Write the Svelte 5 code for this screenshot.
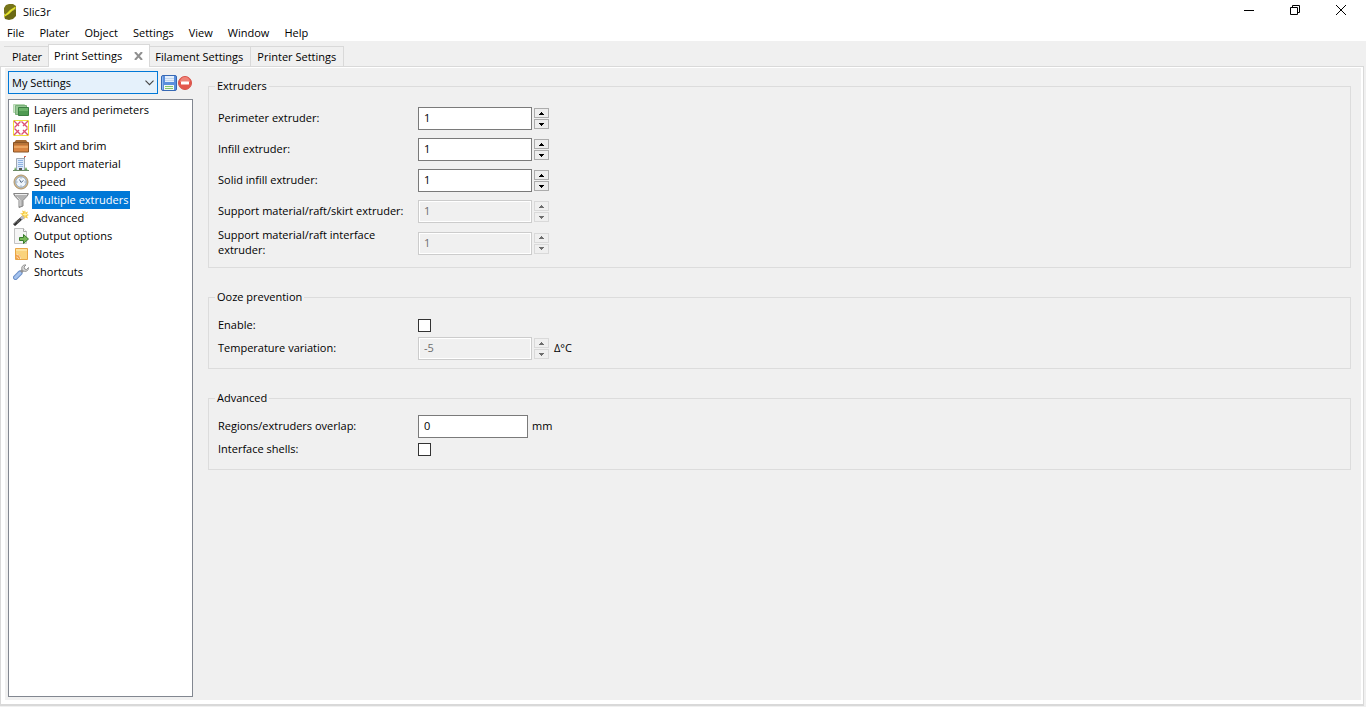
<script>
  const menus = ['File', 'Plater', 'Object', 'Settings', 'View', 'Window', 'Help'];

  const tabs = [
    { name: 'Plater' },
    { name: 'Print Settings', closable: true },
    { name: 'Filament Settings' },
    { name: 'Printer Settings' }
  ];

  const pages = [
    { icon: 'layers', name: 'Layers and perimeters' },
    { icon: 'infill', name: 'Infill' },
    { icon: 'box', name: 'Skirt and brim' },
    { icon: 'building', name: 'Support material' },
    { icon: 'time', name: 'Speed' },
    { icon: 'funnel', name: 'Multiple extruders' },
    { icon: 'wand', name: 'Advanced' },
    { icon: 'output', name: 'Output options' },
    { icon: 'note', name: 'Notes' },
    { icon: 'wrench', name: 'Shortcuts' }
  ];

  let activeTab = $state('Print Settings');
  let activePage = $state('Multiple extruders');
  let preset = $state('My Settings');

  let groups = $state([
    {
      title: 'Extruders',
      spaced: true,
      options: [
        { id: 'perimeter_extruder', label: 'Perimeter extruder:', type: 'spin', value: 1 },
        { id: 'infill_extruder', label: 'Infill extruder:', type: 'spin', value: 1 },
        { id: 'solid_infill_extruder', label: 'Solid infill extruder:', type: 'spin', value: 1 },
        { id: 'support_extruder', label: 'Support material/raft/skirt extruder:', type: 'spin', value: 1, disabled: true },
        { id: 'interface_extruder', label: 'Support material/raft interface extruder:', type: 'spin', value: 1, disabled: true }
      ]
    },
    {
      title: 'Ooze prevention',
      options: [
        { id: 'ooze_prevention', label: 'Enable:', type: 'bool', value: false },
        { id: 'temperature_delta', label: 'Temperature variation:', type: 'spin', value: -5, unit: 'Δ°C', disabled: true }
      ]
    },
    {
      title: 'Advanced',
      options: [
        { id: 'regions_overlap', label: 'Regions/extruders overlap:', type: 'text', value: '0', unit: 'mm' },
        { id: 'interface_shells', label: 'Interface shells:', type: 'bool', value: false }
      ]
    }
  ]);
</script>

<svelte:head>
  <title>Slic3r</title>
</svelte:head>

<div class="window">
  <header class="titlebar">
    <svg class="logo" width="12" height="16" viewBox="0 0 12 16">
      <path d="M5 0h4l3 2v3L1 11 0 9V4l2-3z" fill="#77751b" />
      <path d="M12 5v7l-3 3-4 1-4-1-1-3v-1z" fill="#6b6914" />
      <path d="M0 11.500 3 9l3-3 5.500-3.500v2L8 7l-3 3-5 3z" fill="#e4e42c" />
    </svg>
    <span class="title">Slic3r</span>
    <div class="window-buttons">
      <button aria-label="Minimize">
        <svg width="10" height="10" viewBox="0 0 10 10"><path d="M0 5.500h10" stroke="#000" /></svg>
      </button>
      <button aria-label="Restore">
        <svg width="10" height="10" viewBox="0 0 10 10" fill="none" stroke="#000">
          <path d="M.5 2.500h7v7h-7z" />
          <path d="M2.500 2.500v-2h7v7h-2" />
        </svg>
      </button>
      <button aria-label="Close">
        <svg width="10" height="10" viewBox="0 0 10 10"><path d="M0 0l10 10M10 0L0 10" stroke="#000" /></svg>
      </button>
    </div>
  </header>

  <nav class="menubar">
    {#each menus as menu}
      <button>{menu}</button>
    {/each}
  </nav>

  <div class="tabs">
    {#each tabs as tab}
      <div class="tab" class:active={activeTab === tab.name}>
        <button class="tab-name" onclick={() => (activeTab = tab.name)}>{tab.name}</button>
        {#if tab.closable}
          <button class="tab-close" aria-label="Close tab">
            <svg width="9" height="8" viewBox="0 0 9 8"><path d="M1 0l7 8M8 0L1 8" stroke="#8f8f8f" stroke-width="2" /></svg>
          </button>
        {/if}
      </div>
    {/each}
  </div>

  <main class="pane">
    <div class="content">
      <aside class="sidebar">
        <div class="presets">
          <div class="preset-select">
            <select bind:value={preset} aria-label="Preset">
              <option>My Settings</option>
            </select>
            <svg class="chevron" width="9" height="6" viewBox="0 0 9 6"><path d="M.5.7l4 4 4-4" fill="none" stroke="#444" stroke-width="1.100" /></svg>
          </div>
          <button aria-label="Save preset">
            <svg width="16" height="16" viewBox="0 0 16 16">
              <rect x=".5" y=".5" width="15" height="15" rx="1.500" fill="#5b8fdc" stroke="#3668b4" />
              <path d="M1.500 1.500v13" stroke="#92b9ef" />
              <path d="M4 1h9v6H4z" fill="#e4effc" />
              <path d="M4 3.500h9M4 5.500h9" stroke="#c3d5ec" />
              <path d="M3 10h10v5H3z" fill="#f4f8f1" />
              <path d="M4 11.500h8M4 13.500h8" stroke="#82c56b" />
            </svg>
          </button>
          <button aria-label="Delete preset">
            <svg width="14" height="14" viewBox="0 0 14 14">
              <circle cx="7" cy="7" r="6.500" fill="#e4574c" stroke="#d65249" />
              <path d="M2 6a5 5 0 0 1 10 0z" fill="#ef8378" />
              <rect x="3" y="5.500" width="8" height="3" rx=".5" fill="#fff" />
            </svg>
          </button>
        </div>

        <ul class="pages">
          {#each pages as page}
            <li>
              <button class="page" class:selected={activePage === page.name} onclick={() => (activePage = page.name)}>
                <svg width="16" height="16" viewBox="0 0 16 16">
                  {#if page.icon === 'layers'}
                    <path d="M.5 2.500h11v8H.5z" fill="#cfe5cb" stroke="#b4d6b0" />
                    <path d="M2.500 3.500h11v9h-11z" fill="#98c795" stroke="#78b078" />
                    <path d="M5.500 5.500h10v8h-10z" fill="#4f9a52" stroke="#3b7f42" />
                    <path d="M6 6h9v3H6z" fill="#6db36b" />
                  {:else if page.icon === 'infill'}
                    <path d="M.5.5h15v15H.5z" fill="#fff" stroke="#eee23a" />
                    <path d="M1 1l5 5M15 1l-5 5M1 15l5-5M15 15l-5-5" stroke="#dc5275" stroke-width="1.400" />
                    <path d="M7.500 1.500L1.500 7.500M8.500 1.500l6 6M1.500 8.500l6 6M14.500 8.500l-6 6" stroke="#dc5275" stroke-width="1.400" />
                  {:else if page.icon === 'box'}
                    <path d="M3 2h10l3 4H0z" fill="#a56b33" />
                    <path d="M.5 4.500h15v9.500h-15z" fill="#d98542" stroke="#8a5426" />
                    <path d="M1 5h14v2H1z" fill="#b9763a" />
                    <path d="M1 8h14v2H1z" fill="#eba561" />
                  {:else if page.icon === 'building'}
                    <path d="M11.500 0v4" stroke="#777" />
                    <path d="M11 0h2v1h-2z" fill="#e06555" />
                    <path d="M3.500 2.500h8v12h-8z" fill="#dce9fb" stroke="#a0a7b0" />
                    <path d="M5 4.500h5M5 6.500h5M5 8.500h5M5 10.500h5" stroke="#8fb2e2" />
                    <path d="M6 12h3v3H6z" fill="#555" />
                    <path d="M1 15l1-4 2 4zM11 15l2-4 2 4z" fill="#65a75c" />
                    <path d="M0 14.500h16" stroke="#6b8b65" />
                  {:else if page.icon === 'time'}
                    <circle cx="8" cy="8" r="7" fill="#d9bd8c" stroke="#a99370" />
                    <circle cx="8" cy="8" r="5.300" fill="#eef5fc" stroke="#8fa9c8" />
                    <path d="M6.500 5.500L8 8.500l2.500-2" fill="none" stroke="#5a6f8a" />
                    <path d="M8 3.500v1M8 11.500v1M3.500 8h1M11.500 8h1" stroke="#789" />
                  {:else if page.icon === 'funnel'}
                    <path d="M.7 1.500h14.600c0 2-1.800 3.200-5.300 7V14l-4 1.500v-7C2.500 4.700.7 3.500.7 1.500z" fill="#b3b3b3" stroke="#858585" />
                    <path d="M2 2.500h12" stroke="#ededed" />
                    <path d="M4 5l3 3v6" stroke="#ddd" fill="none" />
                  {:else if page.icon === 'wand'}
                    <path d="M1 15L10 7" stroke="#333" stroke-width="3" />
                    <path d="M.5 14l3-3" stroke="#aaa" />
                    <path d="M12 0l.7 2.500L15 1.500 14 4l2 1-2 1 1 2.500-3-1L11 10l-.5-3L8 7l1.500-2L7 3.500l3-.5L9 .5l2.500 1z" fill="#f6ca45" />
                    <path d="M12 2.500v4M10 4.500h4" stroke="#fff2a2" />
                    <path d="M8 9l2.500-2.500" stroke="#b8b8c6" stroke-width="3" />
                    <path d="M4 12.500l3-3" stroke="#555" stroke-width="2" />
                  {:else if page.icon === 'output'}
                    <path d="M1.500.5h9l3 3v12h-12z" fill="#f5f5f5" stroke="#c2c2c2" />
                    <path d="M10.500.5v3h3" fill="#fff" stroke="#aaa" />
                    <path d="M6.500 9.500h4v-3l5 4.500-5 4.500v-3h-4z" fill="#78b957" stroke="#387c2c" />
                  {:else if page.icon === 'note'}
                    <path d="M2.500 2.500h12v11h-12z" fill="#fad37c" stroke="#e8a544" />
                    <path d="M3 3h11v2H3z" fill="#fde3a0" />
                    <path d="M3 13V8c4 0 5 2 5 5z" fill="#f3a04a" />
                    <path d="M3.500 8.500c3 0 4 2 4 4.500M3.500 11c1 0 2 1 2 2" fill="none" stroke="#fdebc4" />
                  {:else}
                    <path d="M2.500 13.500L7 9" stroke="#6a8fc8" stroke-width="5" stroke-linecap="round" />
                    <path d="M2.500 13.500l4.500-4.500" stroke="#a5c3ee" stroke-width="3" stroke-linecap="round" />
                    <path d="M8 8l3-3" stroke="#919191" stroke-width="3" />
                    <path d="M9.500 6.500C7.500 3 10 .5 13 1l-2 2 .5 2 2 .5 2-2c.3 3-2.500 5-6 3z" fill="#ddd" stroke="#919191" />
                  {/if}
                </svg>
                <span>{page.name}</span>
              </button>
            </li>
          {/each}
        </ul>
      </aside>

      <form class="options">
        {#each groups as group}
          <fieldset class:spaced={group.spaced}>
            <legend>{group.title}</legend>
            {#each group.options as option}
              <div class="row">
                <label for={option.id}>{option.label}</label>
                {#if option.type === 'bool'}
                  <input id={option.id} type="checkbox" bind:checked={option.value} />
                {:else if option.type === 'spin'}
                  <input id={option.id} class="field spin" type="number" bind:value={option.value} disabled={option.disabled} />
                  <div class="stepper">
                    <button type="button" aria-label="Increase" disabled={option.disabled} onclick={() => option.value++}>
                      <svg width="5" height="3" viewBox="0 0 5 3"><path d="M2 0h1v1h1v1h1v1H0V2h1V1h1z" fill="currentColor" /></svg>
                    </button>
                    <button type="button" aria-label="Decrease" disabled={option.disabled} onclick={() => option.value--}>
                      <svg width="5" height="3" viewBox="0 0 5 3"><path d="M0 0h5v1H4v1H3v1H2V2H1V1H0z" fill="currentColor" /></svg>
                    </button>
                  </div>
                {:else}
                  <input id={option.id} class="field" type="text" bind:value={option.value} />
                {/if}
                {#if option.unit}
                  <span class="unit">{option.unit}</span>
                {/if}
              </div>
            {/each}
          </fieldset>
        {/each}
      </form>
    </div>
  </main>
</div>

<style>
  :global(body) {
    margin: 0;
    background: #f0f0f0;
  }

  .window {
    display: flex;
    flex-direction: column;
    box-sizing: border-box;
    min-height: 100vh;
    padding-bottom: 1px;
    color: #000;
    font-family: 'Open Sans', 'Segoe UI', sans-serif;
    font-size: 11px;
    line-height: 15px;
  }

  button,
  input,
  select {
    margin: 0;
    padding: 0;
    border: 0;
    border-radius: 0;
    background: none;
    color: inherit;
    font: inherit;
  }

  svg {
    display: block;
    flex: none;
  }

  .titlebar {
    display: flex;
    align-items: center;
    height: 23px;
    padding: 0 2px 0 4px;
    background: #fff;
  }

  .title {
    margin-left: 7px;
  }

  .window-buttons {
    display: flex;
    align-self: flex-start;
    margin-left: auto;
  }

  .window-buttons button {
    display: flex;
    align-items: center;
    justify-content: center;
    width: 46px;
    height: 20px;
  }

  .menubar {
    display: flex;
    gap: 1px;
    height: 18px;
    background: #fff;
  }

  .menubar button {
    padding: 0 7px;
  }

  .tabs {
    display: flex;
    align-items: flex-end;
    box-sizing: border-box;
    height: 25px;
    padding: 0 4px;
  }

  .tab {
    display: flex;
    align-items: center;
    box-sizing: border-box;
    height: 20px;
    padding: 0 6px;
    border: 1px solid #d9d9d9;
    border-width: 1px 1px 0 0;
  }

  .tab:first-child {
    padding-left: 8px;
  }

  .tab.active {
    z-index: 1;
    height: 23px;
    margin-bottom: -1px;
    margin-left: -1px;
    padding: 0 6px 1px 5px;
    border-left-width: 1px;
    background: #fff;
  }

  .tab-close {
    margin-left: 12px;
  }

  .tab.active + .tab {
    padding-left: 5px;
  }

  .tab.active + .tab,
  .tab:last-child {
    padding-right: 7px;
  }

  .pane {
    display: flex;
    flex: 1;
    margin-right: 2px;
    padding: 1px 2px 4px 4px;
    border: 1px solid #d9d9d9;
    border-bottom-width: 2px;
    background: #fff;
  }

  .content {
    display: flex;
    flex: 1;
    gap: 15px;
    padding: 3px 10px 3px 3px;
    background: #f0f0f0;
  }

  .sidebar {
    display: flex;
    flex-direction: column;
    gap: 5px;
    width: 185px;
  }

  .presets {
    display: flex;
    align-items: center;
    padding-right: 1px;
  }

  .preset-select {
    position: relative;
    flex: 1;
    margin-right: 3px;
  }

  .preset-select select {
    display: block;
    width: 100%;
    height: 23px;
    padding: 0 3px;
    border: 1px solid #0078d7;
    background: #e5f1fb;
    appearance: none;
  }

  .chevron {
    position: absolute;
    top: 9px;
    right: 4px;
    pointer-events: none;
  }

  .presets button + button {
    margin-left: 1px;
  }

  .pages {
    flex: 1;
    margin: 0;
    padding: 1px 4px;
    border: 1px solid #828790;
    background: #fff;
    list-style: none;
  }

  .page {
    display: flex;
    align-items: center;
    gap: 3px;
    height: 18px;
  }

  .page span {
    padding: 0 2px;
    line-height: 18px;
    white-space: nowrap;
  }

  .page.selected span {
    background: #0078d7;
    color: #fff;
  }

  .options {
    display: flex;
    flex: 1;
    flex-direction: column;
    gap: 21px;
    padding-top: 7px;
  }

  fieldset {
    min-width: 0;
    margin: 0;
    padding: 9px 9px 8px;
    border: 1px solid #dcdcdc;
  }

  legend {
    margin-left: -3px;
    padding: 0 2px;
    line-height: 16px;
  }

  .row {
    display: flex;
    align-items: center;
    min-height: 23px;
  }

  .spaced .row {
    min-height: 31px;
  }

  .row label {
    flex: none;
    box-sizing: border-box;
    width: 200px;
    padding: 0 8px 2px 0;
  }

  .field {
    box-sizing: border-box;
    width: 110px;
    height: 23px;
    padding: 0 5px 2px;
    border: 1px solid #7a7a7a;
    background: #fff;
  }

  .spin {
    width: 114px;
    appearance: textfield;
  }

  .spin::-webkit-inner-spin-button {
    display: none;
  }

  .field:disabled {
    border-color: #ccc;
    background: #f0f0f0;
    box-shadow: inset 0 0 0 1px #fff;
    color: #6d6d6d;
  }

  .stepper {
    display: flex;
    flex-direction: column;
    gap: 1px;
    margin: 0 1px 0 2px;
  }

  .stepper button {
    display: flex;
    align-items: center;
    justify-content: center;
    width: 15px;
    height: 10px;
    border: 1px solid #acacac;
    background: #ededed;
  }

  .stepper button:disabled {
    border-color: #d9d9d9;
    background: #efefef;
    color: #6d6d6d;
  }

  input[type='checkbox'] {
    width: 13px;
    height: 13px;
    border: 1px solid #333;
    background: #fff;
    appearance: none;
  }

  input[type='checkbox']:checked {
    background: #333;
    box-shadow: inset 0 0 0 2px #fff;
  }

  .unit {
    padding-bottom: 2px;
    margin-left: 4px;
  }
</style>
